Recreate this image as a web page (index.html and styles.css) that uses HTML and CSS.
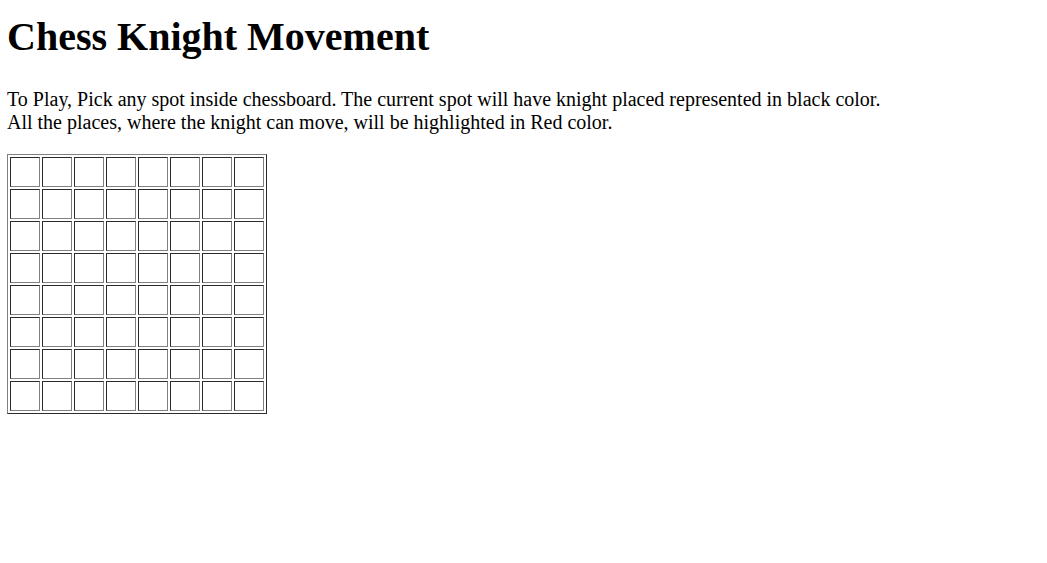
FILE: index.html
```html
<!DOCTYPE html>
<html>
<head>
<meta charset="utf-8">
<title>Chess Knight Movement</title>
<link rel="stylesheet" href="styles.css">
</head>
<body class="page">
<h1 class="title">Chess Knight Movement</h1>
<p class="intro">To Play, Pick any spot inside chessboard. The current spot will have knight placed represented in black color.<br>All the places, where the knight can move, will be highlighted in Red color.</p>
<table class="board">
<tbody>
<tr><td class="cell"></td><td class="cell"></td><td class="cell"></td><td class="cell"></td><td class="cell"></td><td class="cell"></td><td class="cell"></td><td class="cell"></td></tr>
<tr><td class="cell"></td><td class="cell"></td><td class="cell"></td><td class="cell"></td><td class="cell"></td><td class="cell"></td><td class="cell"></td><td class="cell"></td></tr>
<tr><td class="cell"></td><td class="cell"></td><td class="cell"></td><td class="cell"></td><td class="cell"></td><td class="cell"></td><td class="cell"></td><td class="cell"></td></tr>
<tr><td class="cell"></td><td class="cell"></td><td class="cell"></td><td class="cell"></td><td class="cell"></td><td class="cell"></td><td class="cell"></td><td class="cell"></td></tr>
<tr><td class="cell"></td><td class="cell"></td><td class="cell"></td><td class="cell"></td><td class="cell"></td><td class="cell"></td><td class="cell"></td><td class="cell"></td></tr>
<tr><td class="cell"></td><td class="cell"></td><td class="cell"></td><td class="cell"></td><td class="cell"></td><td class="cell"></td><td class="cell"></td><td class="cell"></td></tr>
<tr><td class="cell"></td><td class="cell"></td><td class="cell"></td><td class="cell"></td><td class="cell"></td><td class="cell"></td><td class="cell"></td><td class="cell"></td></tr>
<tr><td class="cell"></td><td class="cell"></td><td class="cell"></td><td class="cell"></td><td class="cell"></td><td class="cell"></td><td class="cell"></td><td class="cell"></td></tr>
</tbody>
</table>
</body>
</html>
```
FILE: styles.css
```css
.page {
  margin: 0 7px 8px;
  font-family: "Liberation Serif", "Times New Roman", serif;
  font-size: 20px;
  color: #000;
  background: #fff;
}
.title {
  font-size: 40px;
  font-weight: bold;
  margin: 13px 0 28px;
}
.intro {
  margin: 28px 0 20px;
}
.board {
  border: 1px outset gray;
  border-spacing: 2px;
}
.cell {
  border: 1px inset gray;
  padding: 1px;
  width: 26px;
  height: 26px;
}
```
